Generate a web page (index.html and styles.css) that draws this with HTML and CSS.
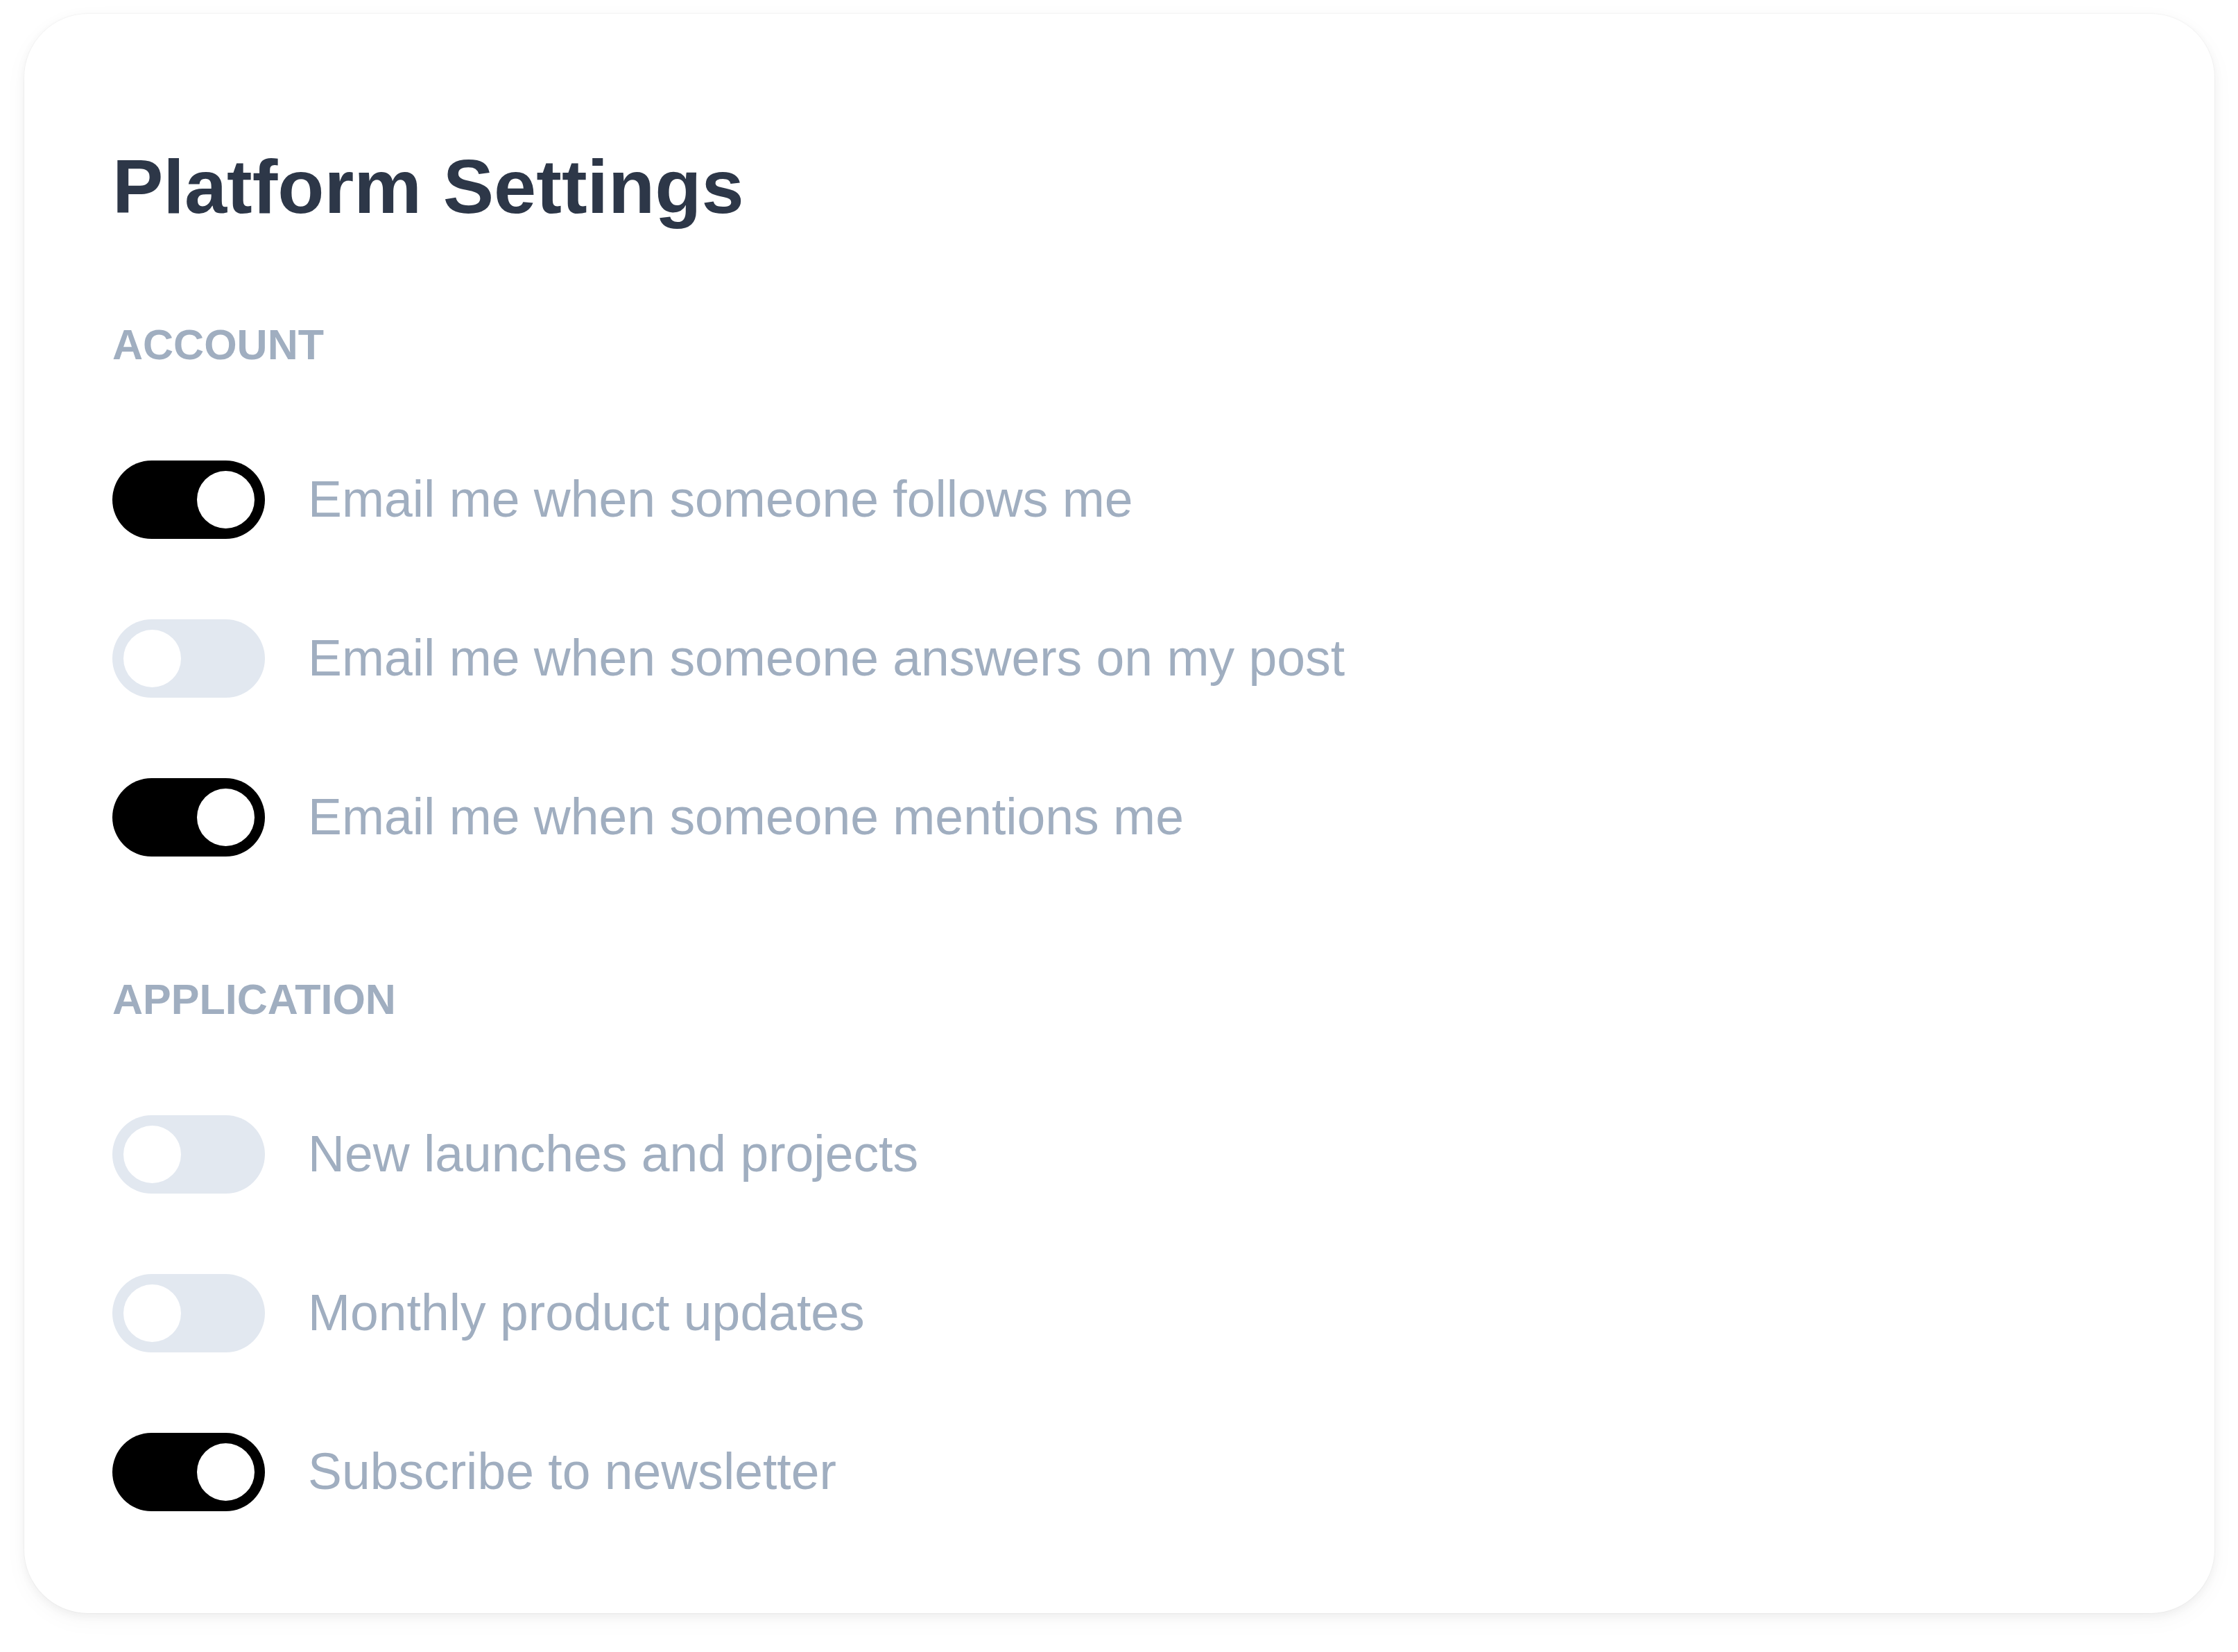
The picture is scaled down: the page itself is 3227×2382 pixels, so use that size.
FILE: index.html
```html
<!DOCTYPE html>
<html lang="en">
<head>
<meta charset="utf-8">
<title>Platform Settings</title>
<link rel="stylesheet" href="styles.css">
</head>
<body>
<div class="card">
  <h1 class="title">Platform Settings</h1>

  <h2 class="section account">Account</h2>
  <ul class="list">
    <li class="row"><span class="switch on"><span class="knob"></span></span><span class="label">Email me when someone follows me</span></li>
    <li class="row"><span class="switch off"><span class="knob"></span></span><span class="label">Email me when someone answers on my post</span></li>
    <li class="row"><span class="switch on"><span class="knob"></span></span><span class="label">Email me when someone mentions me</span></li>
  </ul>

  <h2 class="section application">Application</h2>
  <ul class="list">
    <li class="row"><span class="switch off"><span class="knob"></span></span><span class="label">New launches and projects</span></li>
    <li class="row"><span class="switch off"><span class="knob"></span></span><span class="label">Monthly product updates</span></li>
    <li class="row"><span class="switch on"><span class="knob"></span></span><span class="label">Subscribe to newsletter</span></li>
  </ul>
</div>
</body>
</html>
```

FILE: styles.css
```css
html, body {
  margin: 0;
  padding: 0;
  background: #ffffff;
}

body {
  font-family: "Liberation Sans", Arial, Helvetica, sans-serif;
  padding: 20px 34px 40px 35px;
}

.card {
  box-sizing: border-box;
  height: 2306px;
  background: #ffffff;
  border-radius: 92px;
  box-shadow: 0 0 0 1px rgba(0, 0, 0, 0.025), 0 4px 14px rgba(0, 0, 0, 0.05), 0 10px 34px rgba(0, 0, 0, 0.035);
  padding: 194px 130px 150px 127px;
  display: flex;
  flex-direction: column;
}

.title {
  margin: 0;
  font-size: 110px;
  line-height: 1;
  font-weight: 700;
  color: #2d3748;
}

.section {
  margin: 0;
  font-size: 61px;
  line-height: 1;
  font-weight: 700;
  color: #a0aec0;
  text-transform: uppercase;
}

.account {
  margin-top: 143px;
}

.application {
  margin-top: 176px;
}

.list {
  list-style: none;
  margin: 0;
  padding: 0;
  display: flex;
  flex-direction: column;
  gap: 116px;
  margin-top: 136px;
}

.row {
  display: flex;
  align-items: center;
  gap: 62px;
  height: 113px;
}

.switch {
  box-sizing: border-box;
  width: 220px;
  height: 113px;
  border-radius: 57px;
  padding: 15px;
  display: flex;
  align-items: center;
  flex: none;
}

.switch.on {
  background: #000000;
  justify-content: flex-end;
}

.switch.off {
  background: #e2e8f0;
  justify-content: flex-start;
  padding-left: 16px;
}

.knob {
  width: 83px;
  height: 83px;
  border-radius: 50%;
  background: #ffffff;
}

.label {
  font-size: 73.3px;
  line-height: 1;
  color: #a0aec0;
  white-space: nowrap;
}
```
